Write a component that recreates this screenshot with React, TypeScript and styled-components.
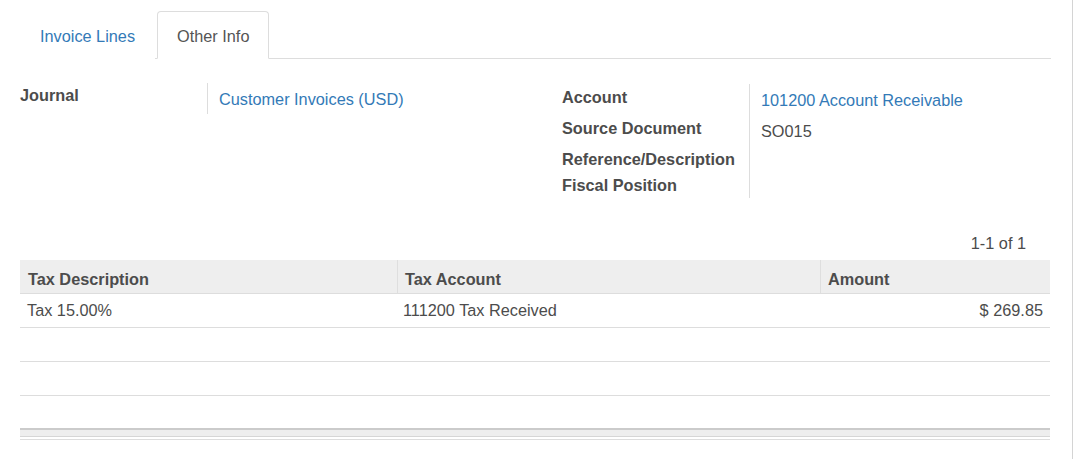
import React from "react";
import styled, { createGlobalStyle } from "styled-components";

const Global = createGlobalStyle`
  html, body { margin: 0; padding: 0; background: #fff; }
  body { font-family: "Liberation Sans", Arial, sans-serif; font-size: 16.3px; color: #4c4c4c; }
`;

const Page = styled.div`
  width: 1073px;
  min-height: 459px;
  box-sizing: border-box;
  border-right: 1px solid #d4d4d4;
  padding: 11px 0 0 20px;
`;

const Content = styled.div`
  width: 1031px;
`;

const TabBar = styled.div`
  display: flex;
  border-bottom: 1px solid #ddd;
  height: 47px;
`;

const Tab = styled.div<{ $active?: boolean }>`
  height: 48px;
  box-sizing: border-box;
  padding: 13px 19px 0 19px;
  line-height: 23px;
  margin-right: 2px;
  border: 1px solid ${(p) => (p.$active ? "#ddd" : "transparent")};
  border-bottom-color: ${(p) => (p.$active ? "#fff" : "transparent")};
  border-radius: 4px 4px 0 0;
  background: #fff;
  color: ${(p) => (p.$active ? "#555" : "#337ab7")};
  cursor: pointer;
`;

const FormArea = styled.div`
  display: grid;
  grid-template-columns: 542px 489px;
  padding-top: 25px;
`;

const Group = styled.div<{ $shift?: number }>`
  display: grid;
  grid-template-columns: 188px 1fr;
  align-content: start;
  margin-top: ${(p) => p.$shift ?? 0}px;
`;

const Label = styled.div`
  font-weight: bold;
  line-height: 18px;
  padding: 4px 10px 4px 0;
  border-right: 1px solid #ddd;
`;

const Value = styled.div<{ $link?: boolean }>`
  line-height: 18px;
  padding: 7px 0 6px 11px;
  color: ${(p) => (p.$link ? "#337ab7" : "#4c4c4c")};
  &:empty { padding: 0; }
`;

const Pager = styled.div`
  text-align: right;
  padding: 36px 25px 0 0;
  line-height: 18px;
  height: 26px;
`;

const Table = styled.div`
  width: 1030px;
`;

const Row = styled.div<{ $head?: boolean }>`
  display: grid;
  grid-template-columns: 377px 423px 230px;
  height: 34px;
  box-sizing: border-box;
  border-bottom: 1px solid #ddd;
  background: ${(p) => (p.$head ? "#eee" : "#fff")};
  font-weight: ${(p) => (p.$head ? "bold" : "normal")};
`;

const Cell = styled.div<{ $sep?: boolean; $right?: boolean; $head?: boolean }>`
  line-height: 18px;
  padding: ${(p) => (p.$head ? "10px 7px 0 7px" : "7px 7px 0 6px")};
  padding-left: ${(p) => (p.$sep && !p.$head ? "5px" : p.$head ? "7px" : "6px")};
  border-left: 1px solid ${(p) => (p.$sep && p.$head ? "#dedede" : "transparent")};
  text-align: ${(p) => (p.$right ? "right" : "left")};
`;

const Footer = styled.div`
  height: 6px;
  margin-top: -2px;
  background: #eee;
  border-top: 2px solid #cbcbcb;
  border-bottom: 1px solid #d6d6d6;
`;

const BottomLine = styled.div`
  margin-top: 2px;
  border-top: 1px solid #ddd;
`;

export default function App() {
  return (
    <>
      <Global />
      <Page>
        <Content>
          <TabBar>
            <Tab>Invoice Lines</Tab>
            <Tab $active>Other Info</Tab>
          </TabBar>
          <FormArea>
            <Group $shift={-1}>
              <Label style={{ paddingTop: 3, paddingBottom: 9 }}>Journal</Label>
              <Value $link>Customer Invoices (USD)</Value>
            </Group>
            <Group>
              <Label>Account</Label>
              <Value $link>101200 Account Receivable</Value>
              <Label>Source Document</Label>
              <Value>SO015</Value>
              <Label>Reference/Description</Label>
              <Value></Value>
              <Label>Fiscal Position</Label>
              <Value></Value>
            </Group>
          </FormArea>
          <Pager>1-1 of 1</Pager>
          <Table>
            <Row $head>
              <Cell $head>Tax Description</Cell>
              <Cell $head $sep>Tax Account</Cell>
              <Cell $head $sep>Amount</Cell>
            </Row>
            <Row>
              <Cell>Tax 15.00%</Cell>
              <Cell $sep>111200 Tax Received</Cell>
              <Cell $right>$ 269.85</Cell>
            </Row>
            <Row>
              <Cell />
              <Cell />
              <Cell />
            </Row>
            <Row>
              <Cell />
              <Cell />
              <Cell />
            </Row>
            <Row>
              <Cell />
              <Cell />
              <Cell />
            </Row>
            <Footer />
            <BottomLine />
          </Table>
        </Content>
      </Page>
    </>
  );
}
